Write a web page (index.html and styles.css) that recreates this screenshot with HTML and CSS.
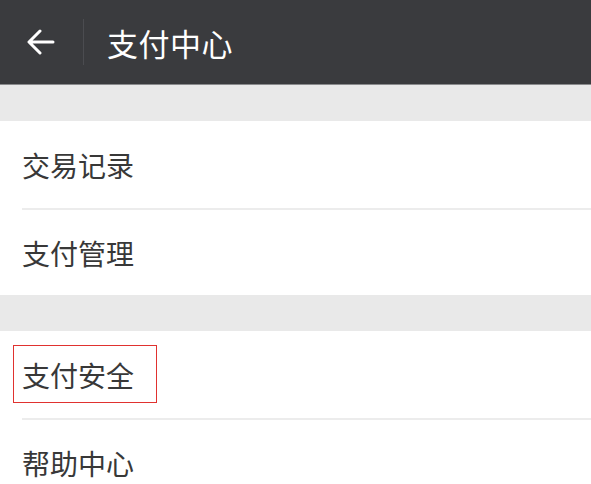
FILE: index.html
```html
<!DOCTYPE html>
<html lang="zh-CN">
<head>
  <meta charset="UTF-8">
  <meta name="viewport" content="width=device-width, initial-scale=1.0">
  <title>支付中心</title>
  <link rel="stylesheet" href="styles.css">
</head>
<body>

  <!-- Top bar -->
  <div class="topbar">
    <span class="back">
      <svg xmlns="http://www.w3.org/2000/svg" width="30" height="26" viewBox="0 0 30 26" fill="none" stroke="#fff" stroke-width="3" stroke-linecap="round" stroke-linejoin="round">
        <path d="M27 13H4M14 2L3 13l11 11"/>
      </svg>
    </span>
    <span class="sep"></span>
    <h1>支付中心</h1>
  </div>

  <div class="gap"></div>

  <div class="group">
    <div class="item">交易记录</div>
    <div class="item">支付管理</div>
  </div>

  <div class="gap"></div>

  <div class="group">
    <div class="item"><span class="mark">支付安全</span></div>
    <div class="item">帮助中心</div>
  </div>

</body>
</html>
```

FILE: styles.css
```css
* {
  margin: 0;
  padding: 0;
  box-sizing: border-box;
  font-family: "Noto Sans CJK SC", "Noto Sans", sans-serif;
}

body {
  background: #fff;
  width: 591px;
  height: 484px;
  overflow: hidden;
}

.topbar {
  height: 85px;
  background: #3a3b3e;
  border-bottom: 1px solid #8a8b8d;
  display: flex;
  align-items: center;
  padding-left: 26px;
}

.back {
  display: flex;
  width: 30px;
  height: 26px;
  margin-right: 27px;
}

.sep {
  width: 1px;
  height: 46px;
  background: #4b4c50;
  margin-right: 23px;
}

.topbar h1 {
  font-size: 31px;
  font-weight: normal;
  color: #fff;
  letter-spacing: 0.5px;
}

.gap {
  height: 36px;
  background: #e9e9e9;
}

.item {
  height: 87px;
  display: flex;
  align-items: center;
  padding-left: 22px;
  font-size: 28px;
  color: #383838;
  background: #fff;
}

.item + .item {
  border-top: 2px solid #ececec;
  margin-left: 22px;
  padding-left: 0;
}

.mark {
  position: relative;
}

.mark::after {
  content: "";
  position: absolute;
  left: -9px;
  right: -23px;
  top: -10px;
  bottom: -8px;
  border: 1.5px solid #e0322f;
}
```
